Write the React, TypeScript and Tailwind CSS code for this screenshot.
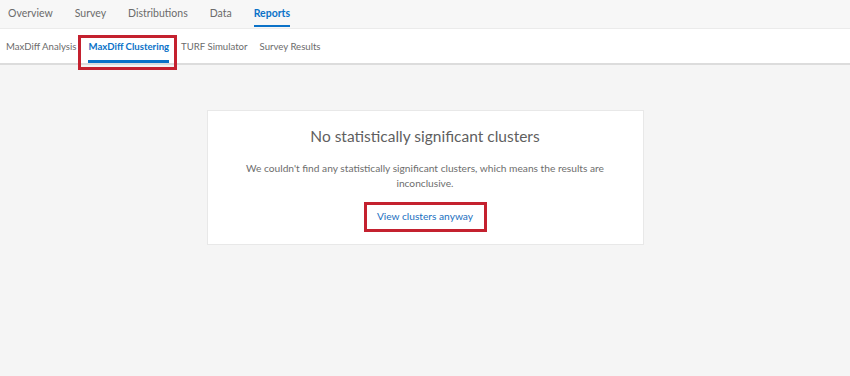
import React from "react";

const topTabs = ["Overview", "Survey", "Distributions", "Data", "Reports"];
const subTabs = ["MaxDiff Analysis", "MaxDiff Clustering", "TURF Simulator", "Survey Results"];

export default function App() {
  return (
    <div
      className="w-[850px] h-[376px] bg-[#f5f5f5] flex flex-col overflow-hidden"
      style={{ fontFamily: "Lato, 'Open Sans', sans-serif" }}
    >
      <div className="h-[29px] bg-[#f7f7f7] border-b border-[#ebebeb] flex items-stretch pl-[8px] gap-[22px] text-[10.5px] text-[#6b6b6b]">
        {topTabs.map((t) => {
          const active = t === "Reports";
          return (
            <div key={t} className="relative flex items-center">
              <span className={active ? "text-[#0b72c8] font-bold" : ""}>{t}</span>
              {active && <span className="absolute left-0 right-0 bottom-[1px] h-[2px] bg-[#0b72c8]" />}
            </div>
          );
        })}
      </div>
      <div className="h-[36px] bg-white border-b-2 border-[#dcdcdc] flex items-stretch pl-[6px] gap-[12px] text-[9.6px] text-[#6b6b6b]">
        {subTabs.map((t) => {
          const active = t === "MaxDiff Clustering";
          return (
            <div key={t} className="relative flex items-center pt-[3px]">
              <span className={active ? "text-[#0b72c8] font-bold" : ""}>{t}</span>
              {active && (
                <>
                  <span className="absolute left-0 right-0 bottom-0 h-[3px] bg-[#0b72c8]" />
                  <span className="absolute left-[-10px] right-[-8px] top-[6px] bottom-[-7px] border-[3px] border-[#c4212f]" />
                </>
              )}
            </div>
          );
        })}
      </div>
      <div className="flex justify-center pt-[45px]">
        <div className="w-[437px] h-[135px] bg-white border border-[#e8e8e8] flex flex-col items-center pt-[14px]">
          <div className="text-[15.5px] text-[#5f5f5f] leading-[22px]">No statistically significant clusters</div>
          <div className="mt-[14px] text-[10.2px] leading-[15px] text-[#6e6e6e] text-center w-[380px]">
            We couldn't find any statistically significant clusters, which means the results are inconclusive.
          </div>
          <div className="mt-[11px] w-[123px] h-[30px] border-[3px] border-[#c4212f] flex items-center justify-center text-[10.2px] text-[#1a6fc0]">
            View clusters anyway
          </div>
        </div>
      </div>
    </div>
  );
}
